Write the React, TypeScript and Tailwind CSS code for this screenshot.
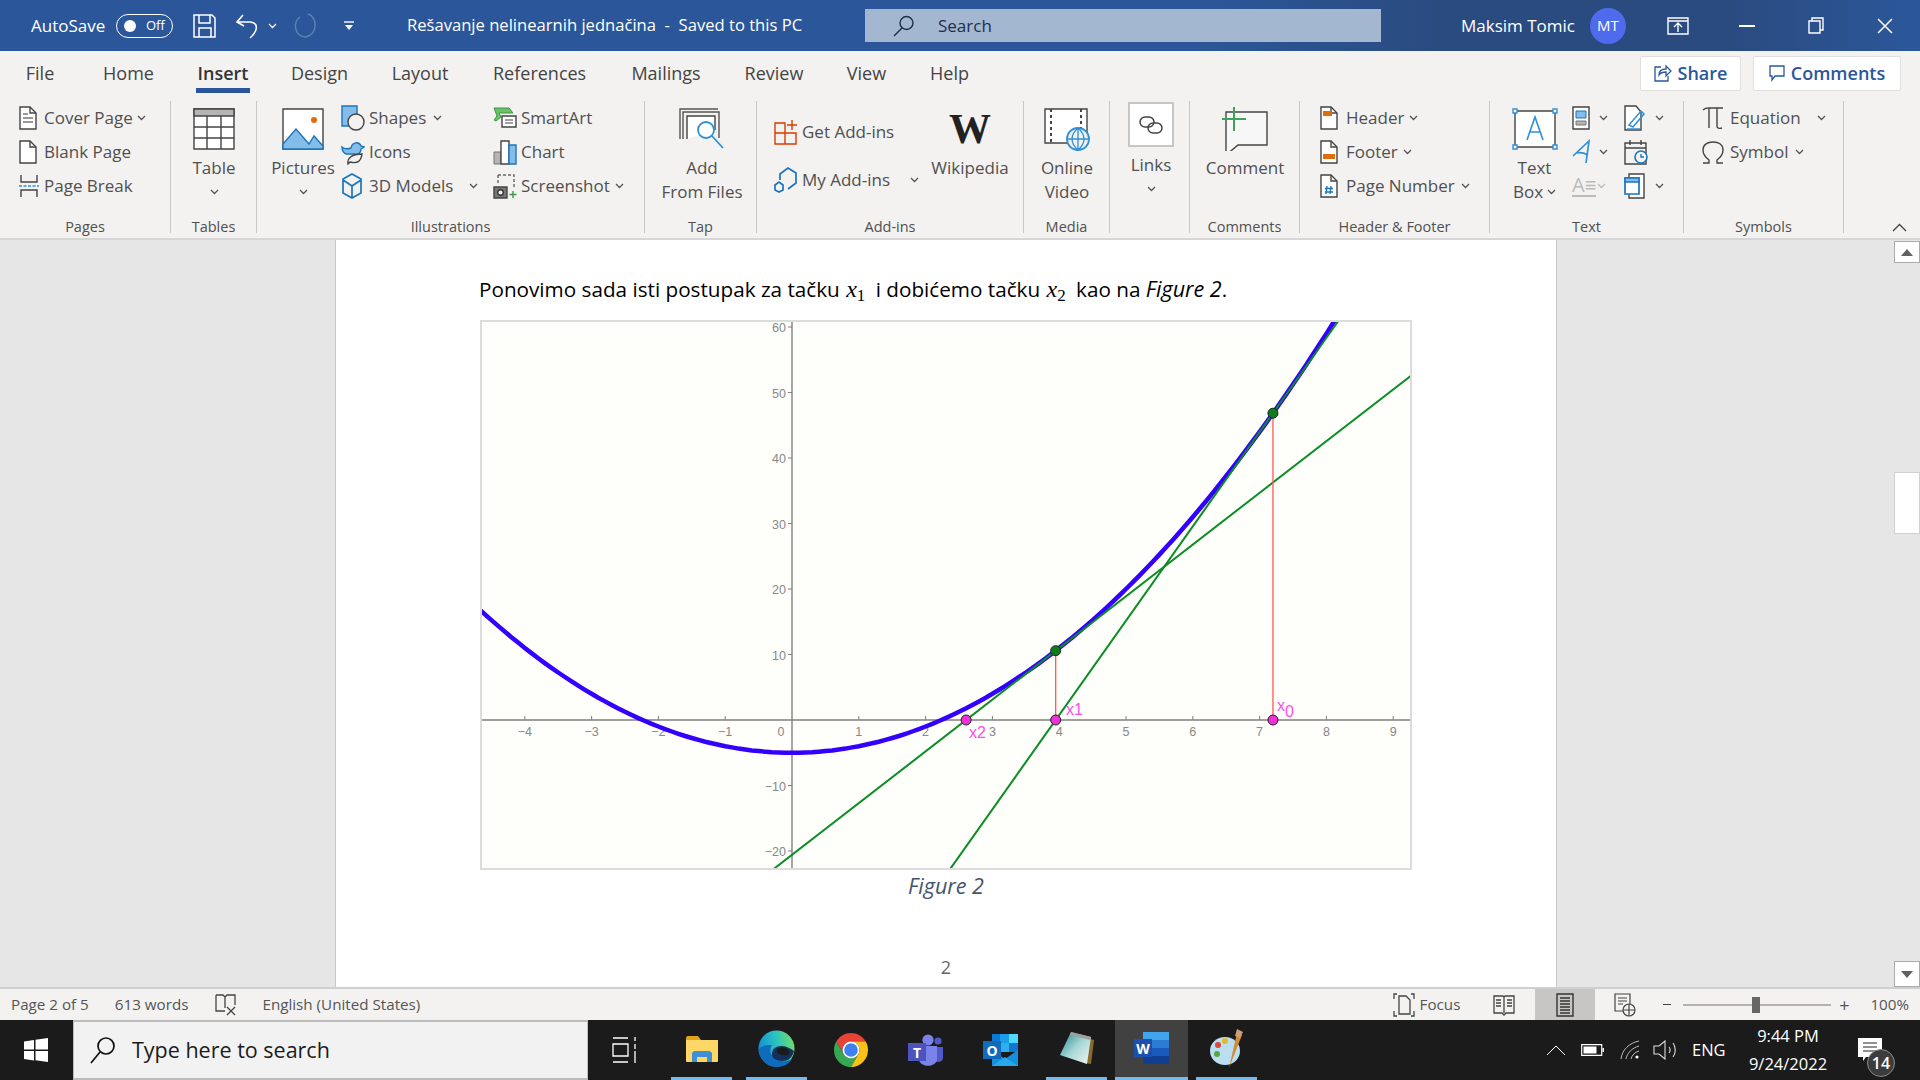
import React from "react";

const UI = "font-['Open_Sans',sans-serif]";

const px = (v: number) => 792 + 66.8 * v;
const py = (v: number) => 720 - 6.55 * v;
const f = (x: number) => x * x - 5;

// --- small shared bits ---
const Chev = ({ c = "#555", className = "" }: { c?: string; className?: string }) => (
  <svg width="9" height="6" viewBox="0 0 9 6" className={`shrink-0 ${className}`}>
    <path d="M1 1l3.5 3.5L8 1" fill="none" stroke={c} strokeWidth="1.3" />
  </svg>
);

const Ico = ({ w = 24, h = 24, children }: { w?: number; h?: number; children: React.ReactNode }) => (
  <svg width={w} height={h} viewBox={`0 0 ${w} ${h}`} className="shrink-0" fill="none" stroke="#444" strokeWidth="1.4">
    {children}
  </svg>
);

const Doc = ({ children }: { children?: React.ReactNode }) => (
  <Ico w={18} h={24}>
    <path d="M1 1h10l6 6v16H1z" fill="#fff" />
    <path d="M11 1v6h6" />
    {children}
  </Ico>
);

// --- ribbon layout helpers ---
const Row = ({ icon, text, iconBox, chev }: { icon: React.ReactNode; text: string; iconBox: string; chev?: string }) => (
  <div className="h-[34px] flex items-center whitespace-nowrap">
    <div className={`${iconBox} shrink-0 flex items-center`}>{icon}</div>
    <span>{text}</span>
    {chev && <Chev className={chev} />}
  </div>
);

const Big = ({ className, icon, lines, chev }: { className: string; icon: React.ReactNode; lines: string[]; chev?: boolean }) => (
  <div className={`${className} shrink-0 flex flex-col items-center`}>
    <div className="h-[55px] flex items-center justify-center">{icon}</div>
    {lines.map((l) => (
      <div key={l} className="h-[24px] leading-[24px] whitespace-nowrap">{l}</div>
    ))}
    {chev && (
      <div className="h-[24px] flex items-center">
        <Chev />
      </div>
    )}
  </div>
);

const Group = ({ className, pad, label, children }: { className: string; pad: string; label: string; children: React.ReactNode }) => (
  <div className={`${className} shrink-0 h-[132px] flex flex-col border-r border-[#c8c6c4]`}>
    <div className={`${pad} flex-1 flex`}>{children}</div>
    <div className="h-[12px] leading-[12px] text-center text-[14.5px] text-[#505050] whitespace-nowrap">{label}</div>
  </div>
);

// --- title bar ---
const TitleBar = () => (
  <div className="h-[51px] flex items-center text-white text-[17px] bg-[linear-gradient(90deg,#2b579a_0%,#2b579a_62%,#2a4b80_75%,#2a4b80_90%,#2b579a_100%)]">
    <div className="w-[865px] shrink-0 flex items-center">
      <span className="ml-[31px] w-[76px] whitespace-nowrap">AutoSave</span>
      <div className="ml-[9px] w-[57px] h-[24px] rounded-full border border-white flex items-center text-[13px]">
        <span className="ml-[7px] w-[12px] h-[12px] rounded-full bg-white" />
        <span className="ml-[10px]">Off</span>
      </div>
      <svg width="25" height="26" viewBox="0 0 25 26" className="ml-[19px]" fill="none" stroke="#fff" strokeWidth="1.5">
        <path d="M2 2h18l3 3v19H2z" />
        <path d="M7 2v8h11V2M7 24v-9h12v9" />
      </svg>
      <svg width="25" height="26" viewBox="0 0 25 26" className="ml-[18px]" fill="none" stroke="#fff" strokeWidth="1.6">
        <path d="M8 2L2 9l7 4M2 9h13c9 1 8 9 0 16" />
      </svg>
      <Chev c="#fff" className="ml-[8px]" />
      <svg width="27" height="27" viewBox="0 0 27 27" className="ml-[15px]" fill="none" stroke="#5d80b6" strokeWidth="1.5">
        <path d="M16 2c10 3 10 21-3 23C3 24 0 11 8 5" />
      </svg>
      <svg width="12" height="12" viewBox="0 0 12 12" className="ml-[24px]">
        <path d="M1 2h10" stroke="#fff" strokeWidth="1.4" />
        <path d="M2 5h8l-4 5z" fill="#fff" />
      </svg>
      <span className="ml-[52px] whitespace-nowrap text-[16.6px]">Rešavanje nelinearnih jednačina&nbsp; -&nbsp; Saved to this PC</span>
    </div>
    <div className="w-[516px] h-[33px] shrink-0 bg-[#a3b7d1] flex items-center text-[#1f2f4a]">
      <svg width="22" height="22" viewBox="0 0 22 22" className="ml-[28px]" fill="none" stroke="#1f2f4a" strokeWidth="1.4">
        <circle cx="13.5" cy="8" r="6.5" />
        <path d="M9 13l-8 8" />
      </svg>
      <span className="ml-[23px]">Search</span>
    </div>
    <span className="ml-[80px] whitespace-nowrap">Maksim Tomic</span>
    <div className="ml-[15px] w-[36px] h-[36px] rounded-full bg-[#4f6bed] flex items-center justify-center text-[15px]">MT</div>
    <svg width="22" height="18" viewBox="0 0 22 18" className="ml-auto" fill="none" stroke="#fff" strokeWidth="1.4">
      <path d="M1 1h20v16H1zM1 4h20M11 15V7M7 10l4-4 4 4" />
    </svg>
    <div className="ml-[50px] w-[16px] h-[2px] bg-white" />
    <svg width="16" height="17" viewBox="0 0 16 17" className="ml-[53px]" fill="none" stroke="#fff" strokeWidth="1.4">
      <path d="M1 4h11v12H1zM4 4V1h11v12h-3" />
    </svg>
    <svg width="16" height="16" viewBox="0 0 16 16" className="ml-[53px] mr-[27px]" stroke="#fff" strokeWidth="1.5">
      <path d="M1 1l14 14M15 1L1 15" />
    </svg>
  </div>
);

// --- tabs ---
const Tabs = () => {
  const tabs: [string, string][] = [
    ["File", "ml-[25px] w-[30px]"],
    ["Home", "ml-[47px] w-[53px]"],
    ["Insert", "ml-[41px] w-[54px]"],
    ["Design", "ml-[40px] w-[59px]"],
    ["Layout", "ml-[42px] w-[58px]"],
    ["References", "ml-[44px] w-[92px]"],
    ["Mailings", "ml-[44px] w-[74px]"],
    ["Review", "ml-[41px] w-[60px]"],
    ["View", "ml-[42px] w-[41px]"],
    ["Help", "ml-[42px] w-[41px]"],
  ];
  return (
    <div className="h-[44px] flex items-center text-[18px] text-[#444]">
      {tabs.map(([t, m]) =>
        t === "Insert" ? (
          <div key={t} className={`${m} relative h-[44px] flex items-center justify-center`}>
            <span className="font-semibold text-[#333]">{t}</span>
            <span className="absolute left-0 right-0 bottom-[2px] h-[5px] bg-[#2b579a]" />
          </div>
        ) : (
          <span key={t} className={`${m} text-center whitespace-nowrap`}>{t}</span>
        )
      )}
      <div className="ml-auto h-[35px] w-[101px] bg-white border border-[#e1dfdd] rounded-[2px] flex items-center justify-center gap-[6px] font-semibold text-[#2b579a]">
        <svg width="18" height="18" viewBox="0 0 18 18" fill="none" stroke="#2b579a" strokeWidth="1.3">
          <path d="M7 3H1v14h13v-5M5 11c0-5 3-6 7-6V2l5 5-5 5V8c-3 0-5 0-7 3z" />
        </svg>
        Share
      </div>
      <div className="ml-[12px] mr-[19px] h-[35px] w-[148px] bg-white border border-[#e1dfdd] rounded-[2px] flex items-center justify-center gap-[6px] font-semibold text-[#2b579a]">
        <svg width="16" height="18" viewBox="0 0 16 18" fill="none" stroke="#2b579a" strokeWidth="1.3">
          <path d="M1 2h14v10H6l-3 4v-4H1z" />
        </svg>
        Comments
      </div>
    </div>
  );
};

// --- ribbon ---
const Ribbon = () => (
  <div className="relative h-[145px] pt-[6px] flex items-start text-[17px] text-[#505050] border-b-2 border-[#d6d6d6]">
    <Group className="w-[171px]" pad="pl-[19px]" label="Pages">
      <div>
        <Row iconBox="w-[25px]" text="Cover Page" chev="ml-[4px]" icon={<Doc><path d="M4 8h5M4 12h10M4 16h10" stroke="#777" /></Doc>} />
        <Row iconBox="w-[25px]" text="Blank Page" icon={<Doc />} />
        <Row
          iconBox="w-[25px]"
          text="Page Break"
          icon={
            <Ico w={20} h={24}>
              <path d="M2 1v7h16V1M2 23v-7h16v7" />
              <path d="M0 12h20" stroke="#2f8fd8" strokeDasharray="3 1.5" />
            </Ico>
          }
        />
      </div>
    </Group>

    <Group className="w-[86px]" pad="pl-[8px]" label="Tables">
      <Big
        className="w-[70px]"
        lines={["Table"]}
        chev
        icon={
          <Ico w={42} h={42}>
            <path d="M1 1h40v40H1z" fill="#fff" />
            <path d="M1 1h40v7H1z" fill="#b4b4b4" />
            <path d="M1 19h40M1 30h40M14 8v33M28 8v33" />
          </Ico>
        }
      />
    </Group>

    <Group className="w-[388px]" pad="pl-[8px]" label="Illustrations">
      <Big
        className="w-[76px]"
        lines={["Pictures"]}
        chev
        icon={
          <Ico w={42} h={42}>
            <path d="M1 1h40v40H1z" fill="#fff" />
            <path d="M1 36l13-15 13 15 5-8 9 10v3H1z" fill="#84bdea" stroke="#1b75bb" />
            <circle cx="32" cy="12" r="3" fill="#e36c0a" stroke="none" />
          </Ico>
        }
      />
      <div className="w-[152px]">
        <Row
          iconBox="w-[28px]"
          text="Shapes"
          chev="ml-[7px]"
          icon={
            <Ico w={24} h={26}>
              <path d="M1 1h15v20H1z" fill="#84bdea" stroke="#1b75bb" />
              <circle cx="15" cy="17" r="8" fill="#f3f2f1" />
            </Ico>
          }
        />
        <Row
          iconBox="w-[28px]"
          text="Icons"
          icon={
            <Ico w={24} h={26}>
              <path d="M1 8c3 3 6 2 9 1 1-6 8-7 10-2l3 1-3 2c0 4-3 6-6 5H5C3 14 1 12 1 8z" fill="#84bdea" stroke="#1b75bb" />
              <path d="M7 25c-1-6 4-10 14-10-1 7-4 10-12 8l-2 2z" fill="#f3f2f1" />
            </Ico>
          }
        />
        <Row
          iconBox="w-[28px]"
          text="3D Models"
          chev="ml-[16px]"
          icon={
            <Ico w={22} h={26}>
              <path d="M11 1l9 5v14l-9 5-9-5V6zM11 13v12M11 13L2 7M11 13l9-6" stroke="#1b75bb" strokeWidth="1.7" />
            </Ico>
          }
        />
      </div>
      <div>
        <Row
          iconBox="w-[28px]"
          text="SmartArt"
          icon={
            <Ico w={24} h={22}>
              <path d="M1 1h15l4 5H6l2 4-5 4-2-1 3-4z" fill="#6abf69" stroke="#3a9a43" strokeWidth="1" />
              <path d="M9 9h14v11H9z" fill="#fff" />
              <path d="M12 13h8M12 16h8" strokeWidth="1" />
            </Ico>
          }
        />
        <Row
          iconBox="w-[28px]"
          text="Chart"
          icon={
            <Ico w={24} h={25}>
              <path d="M1 12h7v12H1z" fill="#b4b4b4" strokeWidth="1" stroke="#777" />
              <path d="M8 1h8v23H8z" fill="#fff" />
              <path d="M16 5h7v19h-7z" fill="#84bdea" stroke="#1b75bb" />
            </Ico>
          }
        />
        <Row
          iconBox="w-[28px]"
          text="Screenshot"
          chev="ml-[5px]"
          icon={
            <Ico w={25} h={25}>
              <path d="M5 1h16v14M5 1v9" strokeDasharray="3 2" stroke="#666" />
              <path d="M1 13h13v11H1z" fill="#777" />
              <circle cx="7.5" cy="18.5" r="2.8" fill="#f3f2f1" stroke="#333" />
              <path d="M20 17v7M16.5 20.5h7" stroke="#3a9a43" />
            </Ico>
          }
        />
      </div>
    </Group>

    <Group className="w-[112px]" pad="pl-[16px]" label="Tap">
      <Big
        className="w-[82px]"
        lines={["Add", "From Files"]}
        icon={
          <Ico w={46} h={42}>
            <path d="M1 31V1h38M4 31V4h36v26" stroke="#555" />
            <path d="M8 31V8h28v14" fill="#fff" />
            <circle cx="27" cy="22" r="8" fill="#fff" stroke="#2f8fd8" strokeWidth="1.8" />
            <path d="M33 28l11 12" stroke="#2f8fd8" strokeWidth="1.8" />
          </Ico>
        }
      />
    </Group>

    <Group className="w-[267px]" pad="pl-[17px]" label="Add-ins">
      <div className="w-[157px] pt-[7px]">
        <div className="h-[48px] flex items-center whitespace-nowrap">
          <svg width="24" height="26" viewBox="0 0 24 26" className="mr-[4px]" fill="none" stroke="#d83b01" strokeWidth="1.4">
            <path d="M1 4h10v10H1zM11 14h11v11H11zM1 14h10v11H1zM18 1v10M13 6h10" />
          </svg>
          Get Add-ins
        </div>
        <div className="h-[48px] flex items-center whitespace-nowrap">
          <svg width="24" height="26" viewBox="0 0 24 26" className="mr-[4px]" fill="none" stroke="#1b75bb" strokeWidth="1.7">
            <path d="M6 13V7l8-6 8 5v10l-8 6M1 18l4-3 4 3v5l-4 2-4-2z" />
          </svg>
          My Add-ins
          <Chev className="ml-[20px]" />
        </div>
      </div>
      <Big
        className="w-[78px]"
        lines={["Wikipedia"]}
        icon={<span className="font-['Liberation_Serif',serif] font-bold text-[42px] leading-none text-[#222]">W</span>}
      />
    </Group>

    <Group className="w-[86px]" pad="pl-[11px]" label="Media">
      <Big
        className="w-[64px]"
        lines={["Online", "Video"]}
        icon={
          <Ico w={48} h={44}>
            <path d="M2 2h42v34H2z" fill="#fff" />
            <path d="M8 2v34M38 2v34" strokeDasharray="3 3" strokeWidth="2" />
            <circle cx="35" cy="32" r="11" fill="#f3f2f1" stroke="#2f8fd8" strokeWidth="1.8" />
            <path d="M24 32h22M35 21v22M35 21c-8 7-8 15 0 22M35 21c8 7 8 15 0 22" stroke="#2f8fd8" strokeWidth="1.3" />
          </Ico>
        }
      />
    </Group>

    <Group className="w-[80px]" pad="pl-[18px]" label="">
      <div className="w-[46px] flex flex-col items-center pt-[1px]">
        <div className="w-[46px] h-[45px] shrink-0 bg-white border-2 border-[#c6c6c6] flex items-center justify-center">
          <Ico w={24} h={18}>
            <rect x="1" y="1" width="14" height="10" rx="5" strokeWidth="1.5" />
            <rect x="9" y="7" width="14" height="10" rx="5" strokeWidth="1.5" />
          </Ico>
        </div>
        <div className="h-[24px] leading-[24px] mt-[6px]">Links</div>
        <div className="h-[24px] flex items-center">
          <Chev />
        </div>
      </div>
    </Group>

    <Group className="w-[110px]" pad="pl-[15px]" label="Comments">
      <Big
        className="w-[80px]"
        lines={["Comment"]}
        icon={
          <Ico w={46} h={44}>
            <path d="M4 5h41v33H16L4 48V15z" fill="#f7f7f7" />
            <path d="M12 0v24M0 12h24" stroke="#3ea45a" strokeWidth="2" />
          </Ico>
        }
      />
    </Group>

    <Group className="w-[190px]" pad="pl-[20px]" label="Header & Footer">
      <div>
        <Row iconBox="w-[26px]" text="Header" chev="ml-[5px]" icon={<Doc><path d="M3 5h9v5H3z" fill="#e36c0a" stroke="none" /></Doc>} />
        <Row iconBox="w-[26px]" text="Footer" chev="ml-[5px]" icon={<Doc><path d="M3 14h12v5H3z" fill="#e36c0a" stroke="none" /></Doc>} />
        <Row iconBox="w-[26px]" text="Page Number" chev="ml-[6px]" icon={<Doc><path d="M7 12l-1 8M11 12l-1 8M5 14.5h8M5 18h8" stroke="#1b75bb" strokeWidth="1.4" /></Doc>} />
      </div>
    </Group>

    <Group className="w-[194px]" pad="pl-[17px]" label="Text">
      <div className="w-[55px] flex flex-col items-center">
        <div className="h-[55px] flex items-center justify-center">
          <Ico w={48} h={44}>
            <path d="M4 4h40v36H4z" fill="#fff" />
            <path d="M16 33l8-23 8 23M19 25h10" stroke="#2f8fd8" strokeWidth="1.6" />
            <path d="M2 2h4v4H2zM42 2h4v4h-4zM2 38h4v4H2zM42 38h4v4h-4z" fill="#fff" stroke="#2f8fd8" />
          </Ico>
        </div>
        <div className="h-[24px] leading-[24px]">Text</div>
        <div className="h-[24px] leading-[24px] flex items-center gap-[4px]">Box<Chev /></div>
      </div>
      <div className="ml-[10px] w-[52px]">
        <div className="h-[34px] flex items-center">
          <Ico w={18} h={24}>
            <path d="M1 1h16v22H1z" fill="#fff" />
            <path d="M4 5h10v7H4z" fill="#84bdea" stroke="#1b75bb" strokeWidth="1" />
            <path d="M4 15h10v4H4z" fill="#b4b4b4" stroke="#777" strokeWidth="1" />
          </Ico>
          <Chev className="ml-[9px]" />
        </div>
        <div className="h-[34px] flex items-center">
          <Ico w={20} h={26}>
            <path d="M1 17L17 2l-3 22M5 14c3-1 7 0 11 2" stroke="#2f8fd8" strokeWidth="1.7" />
          </Ico>
          <Chev className="ml-[7px]" />
        </div>
        <div className="h-[34px] flex items-center">
          <span className="text-[#bbb] text-[20px] leading-none border-b-2 border-[#bbb]">A≡</span>
          <Chev c="#bbb" className="ml-[1px]" />
        </div>
      </div>
      <div>
        <div className="h-[34px] flex items-center">
          <Ico w={22} h={26}>
            <path d="M1 1h11l5 6v18H1z" fill="#fff" />
            <path d="M5 20L17 6l3 3L9 22zM3 24h13" stroke="#2f8fd8" strokeWidth="1.5" />
          </Ico>
          <Chev className="ml-[9px]" />
        </div>
        <div className="h-[34px] flex items-center">
          <Ico w={24} h={26}>
            <path d="M1 4h21v21H1zM1 9h21M6 1v5M17 1v5" />
            <circle cx="17" cy="18" r="6" fill="#f3f2f1" stroke="#1b75bb" strokeWidth="1.6" />
            <path d="M17 15v3h3" stroke="#1b75bb" />
          </Ico>
        </div>
        <div className="h-[34px] flex items-center">
          <Ico w={22} h={26}>
            <path d="M5 1h15v24H5z" fill="#fff" />
            <path d="M1 5h14v16H1z" fill="#fff" stroke="#1b75bb" strokeWidth="1.7" />
            <path d="M1 5h14v4H1z" fill="#84bdea" stroke="#1b75bb" />
          </Ico>
          <Chev className="ml-[9px]" />
        </div>
      </div>
    </Group>

    <Group className="w-[160px]" pad="pl-[18px]" label="Symbols">
      <div>
        <Row
          iconBox="w-[28px]"
          text="Equation"
          chev="ml-[16px]"
          icon={
            <Ico w={22} h={24}>
              <path d="M1 4c3-3 5-2 9-2h11M7 2v20M15 2v18c0 2 2 3 5 2" />
            </Ico>
          }
        />
        <Row
          iconBox="w-[28px]"
          text="Symbol"
          chev="ml-[6px]"
          icon={
            <Ico w={22} h={24}>
              <path d="M1 23h6v-3C3 17 1 14 1 10c0-5 4-8 10-8s10 3 10 8c0 4-2 7-6 10v3h6" />
            </Ico>
          }
        />
      </div>
    </Group>

    <svg width="15" height="9" viewBox="0 0 15 9" className="absolute right-[13px] bottom-[6px]" fill="none" stroke="#444" strokeWidth="1.4">
      <path d="M1 8l6.5-6.5L14 8" />
    </svg>
  </div>
);

// --- the figure ---
const Chart = () => {
  const pts: string[] = [];
  for (let x = -4.8; x <= 8.5; x += 0.1) pts.push(`${px(x).toFixed(1)},${py(f(x)).toFixed(1)}`);
  const x0 = 7.2;
  const x1 = x0 - f(x0) / (2 * x0);
  const x2 = x1 - f(x1) / (2 * x1);
  const tangent = (a: number, from: number, to: number) => {
    const s = 2 * a;
    const at = (x: number) => f(a) + s * (x - a);
    return { x1: px(from), y1: py(at(from)), x2: px(to), y2: py(at(to)) };
  };
  const xTicks = [-4, -3, -2, -1, 1, 2, 3, 4, 5, 6, 7, 8, 9];
  const yTicks = [-20, -10, 10, 20, 30, 40, 50, 60];
  return (
    <svg viewBox="482 322 928 546" className="w-[928px] h-[546px] block">
      <path d="M482 720H1410M792 322V868" stroke="#808080" strokeWidth="1.4" fill="none" />
      {xTicks.map((t) => (
        <g key={t}>
          <path d={`M${px(t)} 716V720`} stroke="#808080" />
          <text x={px(t)} y={736} textAnchor="middle" fontSize="12.5" fill="#888" fontFamily="Liberation Sans">
            {t < 0 ? `−${-t}` : t}
          </text>
        </g>
      ))}
      <text x={781} y={736} textAnchor="middle" fontSize="12.5" fill="#888" fontFamily="Liberation Sans">0</text>
      {yTicks.map((t) => (
        <g key={t}>
          <path d={`M788 ${py(t)}H792`} stroke="#808080" />
          <text x={786} y={py(t) + 5} textAnchor="end" fontSize="12.5" fill="#888" fontFamily="Liberation Sans">
            {t < 0 ? `−${-t}` : t}
          </text>
        </g>
      ))}
      <polyline points={pts.join(" ")} fill="none" stroke="#3300ff" strokeWidth="4.5" />
      <line {...tangent(x0, 2, 8.5)} stroke="#0b8c24" strokeWidth="2" />
      <line {...tangent(x1, -1.2, 9.5)} stroke="#0b8c24" strokeWidth="2" />
      <path d={`M${px(x0)} ${py(f(x0))}V720M${px(x1)} ${py(f(x1))}V720`} stroke="#ff5a4d" strokeWidth="1.3" />
      <circle cx={px(x0)} cy={py(f(x0))} r="5" fill="#0b7d1c" stroke="#222" />
      <circle cx={px(x1)} cy={py(f(x1))} r="5" fill="#0b7d1c" stroke="#222" />
      {[x0, x1, x2].map((x) => (
        <circle key={x} cx={px(x)} cy={720} r="5" fill="#f030d8" stroke="#222" />
      ))}
      <g fill="#ff4ee8" fontFamily="Liberation Sans" fontSize="16">
        <text x={1066} y={715}>x1</text>
        <text x={969} y={738}>x2</text>
        <text x={1277} y={711}>x</text>
        <text x={1285} y={717}>0</text>
      </g>
    </svg>
  );
};

const Math = ({ n }: { n: string }) => (
  <span className="font-['Liberation_Serif',serif] ml-[1px] mr-[5px]">
    <span className="italic text-[24px]">x</span>
    <sub className="text-[17px]">{n}</sub>
  </span>
);

const Page = () => (
  <div className="w-[1222px] shrink-0 bg-white border-x border-[#c8c8c8] pl-[143px] pt-[34px] overflow-hidden">
    <div className="h-[30px] leading-[30px] text-[20.7px] text-black whitespace-nowrap">
      Ponovimo sada isti postupak za tačku <Math n="1" /> i dobićemo tačku <Math n="2" /> kao na <i className="text-[21.5px]">Figure 2</i>.
    </div>
    <div className="mt-[16px] ml-[1px] w-[932px] h-[550px] border-2 border-[#dcdcdc] bg-[#fefefa]">
      <Chart />
    </div>
    <div className="ml-[1px] w-[932px] h-[32px] leading-[32px] text-center italic text-[21.5px] text-[#44546a]">Figure 2</div>
    <div className="ml-[1px] w-[932px] mt-[53px] h-[24px] leading-[24px] text-center text-[18px] text-[#666]">2</div>
  </div>
);

const Scrollbar = () => (
  <div className="ml-auto w-[26px] h-full flex flex-col pt-[1px]">
    <div className="h-[22px] bg-white border border-[#ababab] flex items-center justify-center">
      <span className="w-0 h-0 border-x-[6px] border-x-transparent border-b-[7px] border-b-[#606060]" />
    </div>
    <div className="mt-[209px] h-[62px] bg-white border border-[#d0d0d0]" />
    <div className="mt-auto h-[26px] bg-white border border-[#ababab] flex items-center justify-center">
      <span className="w-0 h-0 border-x-[6px] border-x-transparent border-t-[7px] border-t-[#606060]" />
    </div>
  </div>
);

// --- status bar ---
const StatusBar = () => (
  <div className="h-[33px] bg-[#f3f2f1] border-t-2 border-[#cfcfcf] flex items-center text-[15.2px] text-[#555]">
    <span className="ml-[11px]">Page 2 of 5</span>
    <span className="ml-[26px]">613 words</span>
    <svg width="22" height="22" viewBox="0 0 22 22" className="ml-[27px]" fill="none" stroke="#444" strokeWidth="1.3">
      <path d="M1 1h7l2 2 2-2h8v10M10 3v11M1 1v16h9M12 13l8 8M20 13l-8 8" />
    </svg>
    <span className="ml-[25px]">English (United States)</span>
    <svg width="22" height="24" viewBox="0 0 22 24" className="ml-auto mr-[5px]" fill="none" stroke="#444" strokeWidth="1.3">
      <path d="M1 6V1h3M21 6V1h-3M1 18v5h3M21 18v5h-3M6 3h7l4 4v14H6z" />
    </svg>
    <span>Focus</span>
    <svg width="22" height="22" viewBox="0 0 22 22" className="ml-[33px]" fill="none" stroke="#444" strokeWidth="1.3">
      <path d="M1 2h9l1 1 1-1h9v17h-8l-2 2-2-2H1zM11 3v16M3 6h5M3 9h5M3 12h5M14 6h5M14 9h5M14 12h5" />
    </svg>
    <div className="ml-[20px] w-[60px] h-[31px] bg-[#c8c6c4] flex items-center justify-center">
      <svg width="18" height="24" viewBox="0 0 18 24" fill="none" stroke="#333" strokeWidth="1.4">
        <path d="M1 1h16v22H1zM4 5h10M4 8h10M4 11h10M4 14h10M4 17h10M4 20h10" />
      </svg>
    </div>
    <svg width="22" height="24" viewBox="0 0 22 24" className="ml-[19px]" fill="none" stroke="#444" strokeWidth="1.2">
      <path d="M1 1h15v17H1zM4 5h9M4 8h9M4 11h5" />
      <circle cx="15" cy="17" r="6" fill="#f3f2f1" />
      <path d="M9 17h12M15 11v12" />
    </svg>
    <span className="ml-[27px] w-[8px] h-[1.5px] bg-[#444]" />
    <div className="ml-[12px] w-[148px] h-[2px] bg-[#b3b0ad] flex items-center">
      <span className="ml-[69px] w-[8px] h-[16px] bg-[#666] shrink-0" />
    </div>
    <span className="ml-[7px] text-[18px] leading-none w-[12px] text-center">+</span>
    <span className="ml-[20px] mr-[11px]">100%</span>
  </div>
);

// --- task bar ---
const Slot = ({ className, children }: { className: string; children: React.ReactNode }) => (
  <div className={`${className} shrink-0 h-[60px] flex flex-col items-center`}>
    <div className="flex-1 flex items-center justify-center">{children}</div>
    <span className="w-full h-[3px] bg-[#76b9ed]" />
  </div>
);

const TaskBar = () => (
  <div className="h-[60px] bg-[#1b1b1b] flex items-center text-white">
    <svg width="24" height="24" viewBox="0 0 24 24" className="ml-[24px]" fill="#fff">
      <path d="M0 3.5L10 2v9.5H0zM11.5 1.8L24 0v11.5H11.5zM0 13h10v9.5L0 21zM11.5 13H24v11l-12.5-1.8z" />
    </svg>
    <div className="ml-[25px] w-[515px] h-[60px] bg-[#f2f2f2] border-y-2 border-x border-[#bdbdbd] flex items-center text-[#1b1b1b] text-[21.5px]">
      <svg width="26" height="28" viewBox="0 0 26 28" className="ml-[16px]" fill="none" stroke="#111" strokeWidth="1.7">
        <circle cx="16" cy="10" r="8" />
        <path d="M10 16L1 27" />
      </svg>
      <span className="ml-[16px]">Type here to search</span>
    </div>
    <svg width="24" height="26" viewBox="0 0 24 26" className="ml-[24px]" fill="none" stroke="#fff" strokeWidth="1.3">
      <path d="M1 1h15M1 25h15M1 7h15v12H1zM23 0v4M23 7v5M23 14v12" />
    </svg>
    <Slot className="ml-[35px] w-[61px]">
      <svg width="32" height="26" viewBox="0 0 32 26">
        <path d="M0 2a2 2 0 012-2h10l3 4H0z" fill="#e2a21b" />
        <path d="M0 4h32v21a1 1 0 01-1 1H1a1 1 0 01-1-1z" fill="#ffd766" />
        <path d="M8 15h16l2 2v9h-5v-5H11v5H6v-9z" fill="#3f8fd6" />
      </svg>
    </Slot>
    <Slot className="ml-[14px] w-[61px]">
      <svg width="37" height="37" viewBox="0 0 37 37">
        <defs>
          <linearGradient id="edgeTop" x1="0" y1="0.6" x2="1" y2="0.4">
            <stop offset="0" stopColor="#0f8fd6" />
            <stop offset="0.55" stopColor="#2cc3c0" />
            <stop offset="1" stopColor="#6fdc6a" />
          </linearGradient>
        </defs>
        <circle cx="18.5" cy="18.5" r="18" fill="url(#edgeTop)" />
        <path d="M0.6 20C2 30 9 37 18 37c7 0 12-2 16-8-5 3-12 3-17-1-5-3-6-9-3-13-6 0-12 1-13.4 5z" fill="#0f6cbd" />
        <path d="M14 24c0-5 4-8 9-8 5 0 9 2 13 5-1 4-3 7-6 9-6 2-16 1-16-6z" fill="#12305a" />
        <path d="M19 20c2-3 7-3 10-1 3 2 3 5 0 6-4 1-11-1-10-5z" fill="#1b1b1b" />
      </svg>
    </Slot>
    <svg width="34" height="34" viewBox="4 4 40 40" className="ml-[27px]">
      <path d="M41.32 14A20 20 0 006.68 14L15.34 29A10 10 0 0124 14z" fill="#ea4335" />
      <path d="M6.68 14A20 20 0 0024 44L32.66 29A10 10 0 0115.34 29z" fill="#34a853" />
      <path d="M24 44A20 20 0 0041.32 14H24A10 10 0 0132.66 29z" fill="#fbc116" />
      <circle cx="24" cy="24" r="10" fill="#fff" />
      <circle cx="24" cy="24" r="8" fill="#3f80f0" />
    </svg>
    <svg width="36" height="33" viewBox="0 0 36 33" className="ml-[40px]">
      <circle cx="30" cy="7" r="3.6" fill="#5059c9" />
      <path d="M26 13h9v11c0 4-5 5-9 3z" fill="#5059c9" />
      <circle cx="20" cy="6" r="5.6" fill="#7b83eb" />
      <path d="M11 12h18v13c0 9-18 9-18 0z" fill="#7b83eb" />
      <path d="M0 9h18v18H0z" fill="#4b53bc" />
      <text x="9" y="23.5" textAnchor="middle" fontSize="14" fontWeight="700" fill="#fff" fontFamily="Open Sans">T</text>
    </svg>
    <svg width="36" height="33" viewBox="0 0 36 33" className="ml-[39px]">
      <path d="M9 0h26v18H9z" fill="#0f78d4" />
      <path d="M17 0h9v9h-9z" fill="#1c9ee8" />
      <path d="M26 0h9v9h-9z" fill="#50d9ff" />
      <path d="M17 9h9v9h-9z" fill="#2cb1ee" />
      <path d="M9 16l13 9 13-9v16H9z" fill="#1490df" />
      <path d="M9 32l13-9 13 9z" fill="#28a8ea" />
      <path d="M0 7h18v18H0z" fill="#0f6cbd" />
      <text x="9" y="21.5" textAnchor="middle" fontSize="14" fontWeight="700" fill="#fff" fontFamily="Open Sans">O</text>
    </svg>
    <Slot className="ml-[27px] w-[61px]">
      <svg width="36" height="33" viewBox="0 0 36 33">
        <defs>
          <linearGradient id="padFill" x1="0" y1="0" x2="1" y2="1">
            <stop offset="0" stopColor="#1f7f8c" />
            <stop offset="0.5" stopColor="#a5d8d6" />
            <stop offset="1" stopColor="#f5f5f5" />
          </linearGradient>
        </defs>
        <path d="M14 2l21 6-3 24-6-1z" fill="#8a6a2a" />
        <path d="M12 0l20 5-4 27L1 23z" fill="url(#padFill)" />
        <path d="M12 0l20 5-1 3-20-5z" fill="#a0a0a0" />
      </svg>
    </Slot>
    <Slot className="ml-[8px] w-[73px] bg-[#414141]">
      <svg width="36" height="33" viewBox="0 0 36 33">
        <path d="M9 0h26v8H9z" fill="#41a5ee" />
        <path d="M9 8h26v8H9z" fill="#2b7cd3" />
        <path d="M9 16h26v8H9z" fill="#185abd" />
        <path d="M9 24h26v8H9z" fill="#103f91" />
        <path d="M0 7h18v18H0z" fill="#1d4fae" />
        <text x="9" y="21.5" textAnchor="middle" fontSize="14" fontWeight="700" fill="#fff" fontFamily="Open Sans">W</text>
      </svg>
    </Slot>
    <Slot className="ml-[8px] w-[61px]">
      <svg width="36" height="40" viewBox="0 0 36 40">
        <ellipse cx="16" cy="22" rx="15" ry="14" fill="#b9dff0" />
        <circle cx="9" cy="16" r="3" fill="#d84a3a" />
        <circle cx="16" cy="12" r="3" fill="#e8b62c" />
        <circle cx="8" cy="25" r="3" fill="#57a845" />
        <path d="M28 4l5 2-13 33z" fill="#d68a2e" />
        <path d="M28 0l6 3-3 6-5-2z" fill="#c9a078" />
      </svg>
    </Slot>
    <svg width="20" height="11" viewBox="0 0 20 11" className="ml-auto" fill="none" stroke="#fff" strokeWidth="1">
      <path d="M1 10l9-9 9 9" />
    </svg>
    <svg width="23" height="12" viewBox="0 0 23 12" className="ml-[15px]">
      <path d="M.7.7h20v10.6H.7z" fill="none" stroke="#fff" strokeWidth="1.2" />
      <path d="M2.5 2.5h13v7h-13zM21.5 4h1.5v4h-1.5z" fill="#fff" />
    </svg>
    <svg width="22" height="20" viewBox="0 0 22 20" className="ml-[16px]" fill="none" stroke="#bbb" strokeWidth="1">
      <path d="M1 19C2 10 9 3 19 1M6 19C7 13 12 8 19 6M11 19c1-4 4-7 8-8" />
      <circle cx="17" cy="17" r="1.6" fill="#fff" stroke="none" />
    </svg>
    <svg width="24" height="20" viewBox="0 0 24 20" className="ml-[11px]" fill="none" stroke="#ddd" strokeWidth="1.1">
      <path d="M1 6h5l6-5v18l-6-5H1zM16 7c1.500 2 1.500 4 0 6M20 3c3 4 3 10 0 14" />
    </svg>
    <span className="ml-[15px] w-[35px] text-[16.5px] whitespace-nowrap">ENG</span>
    <div className="ml-[19px] w-[84px] flex flex-col items-center text-[16.5px] leading-[28px] whitespace-nowrap">
      <span>9:44 PM</span>
      <span>9/24/2022</span>
    </div>
    <div className="relative ml-[28px] mr-[32px] w-[30px] h-[60px]">
      <svg width="25" height="24" viewBox="0 0 25 24" className="absolute left-0 top-[18px]">
        <path d="M0 0h24v19H8l-3 4v-4H0z" fill="#fff" />
        <path d="M5 5h14M5 9h14M5 13h14" stroke="#222" strokeWidth="1.1" />
      </svg>
      <div className="absolute left-[9px] top-[29px] w-[28px] h-[28px] rounded-full bg-[#3c3c3c] border border-[#8a8a8a] flex items-center justify-center text-[16px] font-semibold">14</div>
    </div>
  </div>
);

export default function App() {
  return (
    <div className={`w-[1920px] h-[1080px] overflow-hidden flex flex-col bg-[#f3f2f1] ${UI}`}>
      <TitleBar />
      <Tabs />
      <Ribbon />
      <div className="h-[747px] shrink-0 bg-[#e6e6e6] flex overflow-hidden">
        <div className="w-[335px] shrink-0" />
        <Page />
        <Scrollbar />
      </div>
      <StatusBar />
      <TaskBar />
    </div>
  );
}
